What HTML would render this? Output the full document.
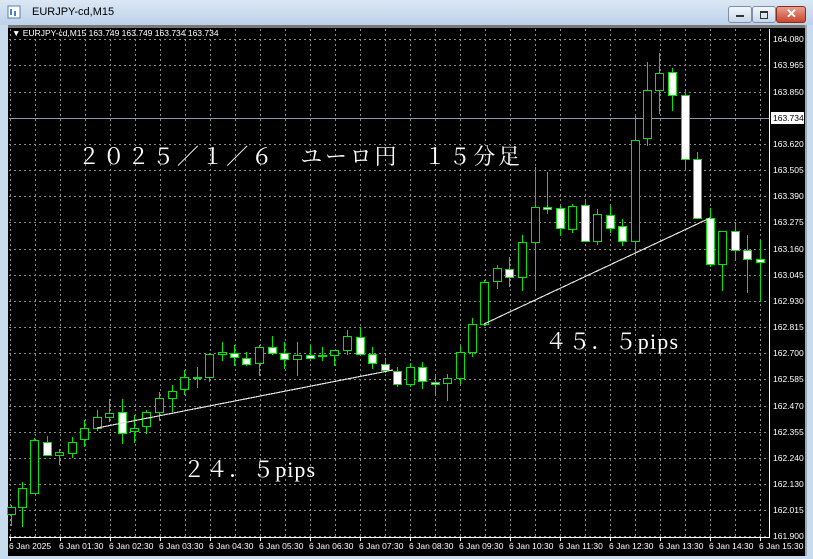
<!DOCTYPE html>
<html><head><meta charset="utf-8"><style>
html,body{margin:0;padding:0;width:813px;height:559px;overflow:hidden;background:#c9dbee;font-family:"Liberation Sans",sans-serif}
#title{position:absolute;left:0;top:0;width:813px;height:25px;background:linear-gradient(#dbe7f4,#bcd2ea)}
#title .t{position:absolute;left:32px;top:6px;font-size:11px;color:#000}
.btn{position:absolute;top:6px;height:15px;border:1px solid #7d8ea3;border-radius:3px;background:linear-gradient(#f2f6fb,#c9d8ea)}
</style></head><body>
<div id="title">
<svg style="position:absolute;left:7px;top:5px" width="14" height="14"><rect x="1" y="1" width="12" height="12" fill="#fff" stroke="#5a7fae"/><rect x="3" y="4" width="2" height="6" fill="#4a7fc0"/><rect x="7" y="6" width="2" height="5" fill="#4a7fc0"/></svg>
<span class="t">EURJPY-cd,M15</span>
<div class="btn" style="left:728px;width:22px"><div style="position:absolute;left:7px;top:8px;width:8px;height:2px;background:#333"></div></div>
<div class="btn" style="left:752px;width:22px"><div style="position:absolute;left:7px;top:4px;width:6px;height:5px;border:1px solid #333;border-top-width:2px"></div></div>
<div class="btn" style="left:776px;width:28px;background:linear-gradient(#e8a08f,#c8452d);border-color:#8a2b1b"><div style="position:absolute;left:9px;top:-1px;color:#fff;font-weight:bold;font-size:13px">✕</div></div>
</div>
<svg id="c" style="position:absolute;left:0;top:0" width="813" height="559" xmlns="http://www.w3.org/2000/svg"></svg>
<script>
var s=document.getElementById('c'),h='';
h+='<rect x="8" y="25" width="797" height="531" fill="#000"/>';
h+='<rect x="8" y="25" width="797" height="3" fill="#777"/>';
h+='<rect x="805" y="25" width="2" height="531" fill="#9aa9b8"/>';
for(var x=10;x<=760;x+=25)h+='<line x1="'+(x+.5)+'" y1="29" x2="'+(x+.5)+'" y2="537" stroke="#8a8a8a" stroke-dasharray="2,3"/>';
var labs=['164.080','163.965','163.850','163.734','163.620','163.505','163.390','163.275','163.160','163.045','162.930','162.815','162.700','162.585','162.470','162.355','162.240','162.130','162.015','161.900'];
var ys=[39,65,92,118,144,170,196,222,249,275,301,327,353,379,406,432,458,484,510,536];
for(var i=0;i<ys.length;i++){if(i!=3)h+='<line x1="9" y1="'+(ys[i]+.5)+'" x2="769" y2="'+(ys[i]+.5)+'" stroke="#8a8a8a" stroke-dasharray="2,3"/>';}
h+='<line x1="9" y1="118.5" x2="769" y2="118.5" stroke="#8a9aaa"/>';
h+='<line x1="769.5" y1="29" x2="769.5" y2="537" stroke="#fff"/><line x1="9" y1="537.5" x2="770" y2="537.5" stroke="#fff"/>';
for(var i=0;i<ys.length;i++){
 if(i==3){h+='<rect x="771" y="112" width="33" height="12" fill="#fff"/><text x="773" y="121" font-size="8.5" fill="#000">163.734</text>';}
 else h+='<text x="773" y="'+(ys[i]+3)+'" font-size="8.5" fill="#fff">'+labs[i]+'</text>';
}
var t=['6 Jan 2025','6 Jan 01:30','6 Jan 02:30','6 Jan 03:30','6 Jan 04:30','6 Jan 05:30','6 Jan 06:30','6 Jan 07:30','6 Jan 08:30','6 Jan 09:30','6 Jan 10:30','6 Jan 11:30','6 Jan 12:30','6 Jan 13:30','6 Jan 14:30','6 Jan 15:30'];
for(var i=0;i<t.length;i++){h+='<line x1="'+(10.5+i*50)+'" y1="537" x2="'+(10.5+i*50)+'" y2="541" stroke="#fff"/><text x="'+(9+i*50)+'" y="549" font-size="8.5" fill="#fff">'+t[i]+'</text>';}
h+='<text x="12" y="36" font-size="8.5" fill="#fff">▼ EURJPY-cd,M15  163.749 163.749 163.734 163.734</text>';
var C=[[11,505,507,514,525,1],[22,482,488,507,526,1],[34,438,440,493,493,1],[47,436,442,455,455,0],[59,449,452,455,464,1],[72,437,442,453,457,1],[84,420,428,439,446,1],[97,410,417,428,430,1],[109,399,413,417,421,1],[122,399,412,433,443,0],[134,415,428,431,442,1],[146,410,412,426,433,1],[159,392,398,412,420,1],[172,385,391,398,411,1],[184,370,377,389,394,1],[197,367,377,377,387,1],[209,353,354,377,381,1],[222,342,352,354,360,1],[234,345,353,357,365,0],[246,352,358,364,365,0],[259,345,347,363,375,1],[272,336,347,353,354,0],[284,342,353,359,368,0],[297,342,355,359,375,1],[310,345,355,358,358,0],[322,347,355,355,360,1],[334,350,350,355,365,1],[347,330,336,350,354,1],[360,327,337,354,354,0],[372,347,354,363,368,0],[385,358,364,370,372,0],[397,367,371,384,386,0],[410,363,367,384,386,1],[422,362,367,381,388,0],[435,375,382,384,395,0],[447,374,378,383,400,1],[460,346,352,378,383,1],[472,318,324,352,356,1],[484,280,282,324,325,1],[497,265,268,281,288,1],[509,257,269,277,286,0],[522,235,242,277,290,1],[535,167,207,242,290,1],[547,172,207,209,213,0],[560,206,208,228,235,0],[572,204,206,229,232,1],[585,199,205,241,241,0],[597,209,214,241,244,1],[610,206,215,228,232,0],[622,219,226,241,245,0],[635,116,140,241,254,1],[647,62,90,138,145,1],[659,53,73,90,113,1],[672,68,72,95,110,0],[685,90,95,159,170,0],[697,152,159,218,218,0],[710,208,218,264,266,0],[722,231,231,264,290,1],[735,222,231,250,258,0],[747,235,250,259,292,0],[760,240,259,262,301,0]];
var G='#00e600';
C.forEach(function(c){var x=c[0];
 h+='<rect x="'+x+'" y="'+c[1]+'" width="1" height="'+(c[4]-c[1]+1)+'" fill="'+G+'"/>';
 var ht=Math.max(c[3]-c[2],1)+1;
 h+='<rect x="'+(x-4)+'" y="'+c[2]+'" width="9" height="'+ht+'" fill="'+G+'"/>';
 if(ht>2)h+='<rect x="'+(x-3)+'" y="'+(c[2]+1)+'" width="7" height="'+(ht-2)+'" fill="'+(c[5]?'#000':'#fff')+'"/>';
});
h+='<line x1="97" y1="428" x2="393" y2="370" stroke="#ddd" stroke-width="1.2"/>';
h+='<line x1="484" y1="324" x2="710" y2="218" stroke="#ddd" stroke-width="1.2"/>';
var F='font-family="Liberation Serif,Noto Serif CJK SC,serif" fill="#fff"';
h+='<text x="78" y="164" font-size="22" '+F+' textLength="442">２０２５／１／６　ユーロ円　１５分足</text>';
h+='<text x="183" y="477" font-size="22" '+F+' textLength="132">２４．５pips</text>';
h+='<text x="545" y="349" font-size="22" '+F+' textLength="133">４５．５pips</text>';
s.setAttribute('shape-rendering','crispEdges');
s.innerHTML=h;
</script>
</body></html>
